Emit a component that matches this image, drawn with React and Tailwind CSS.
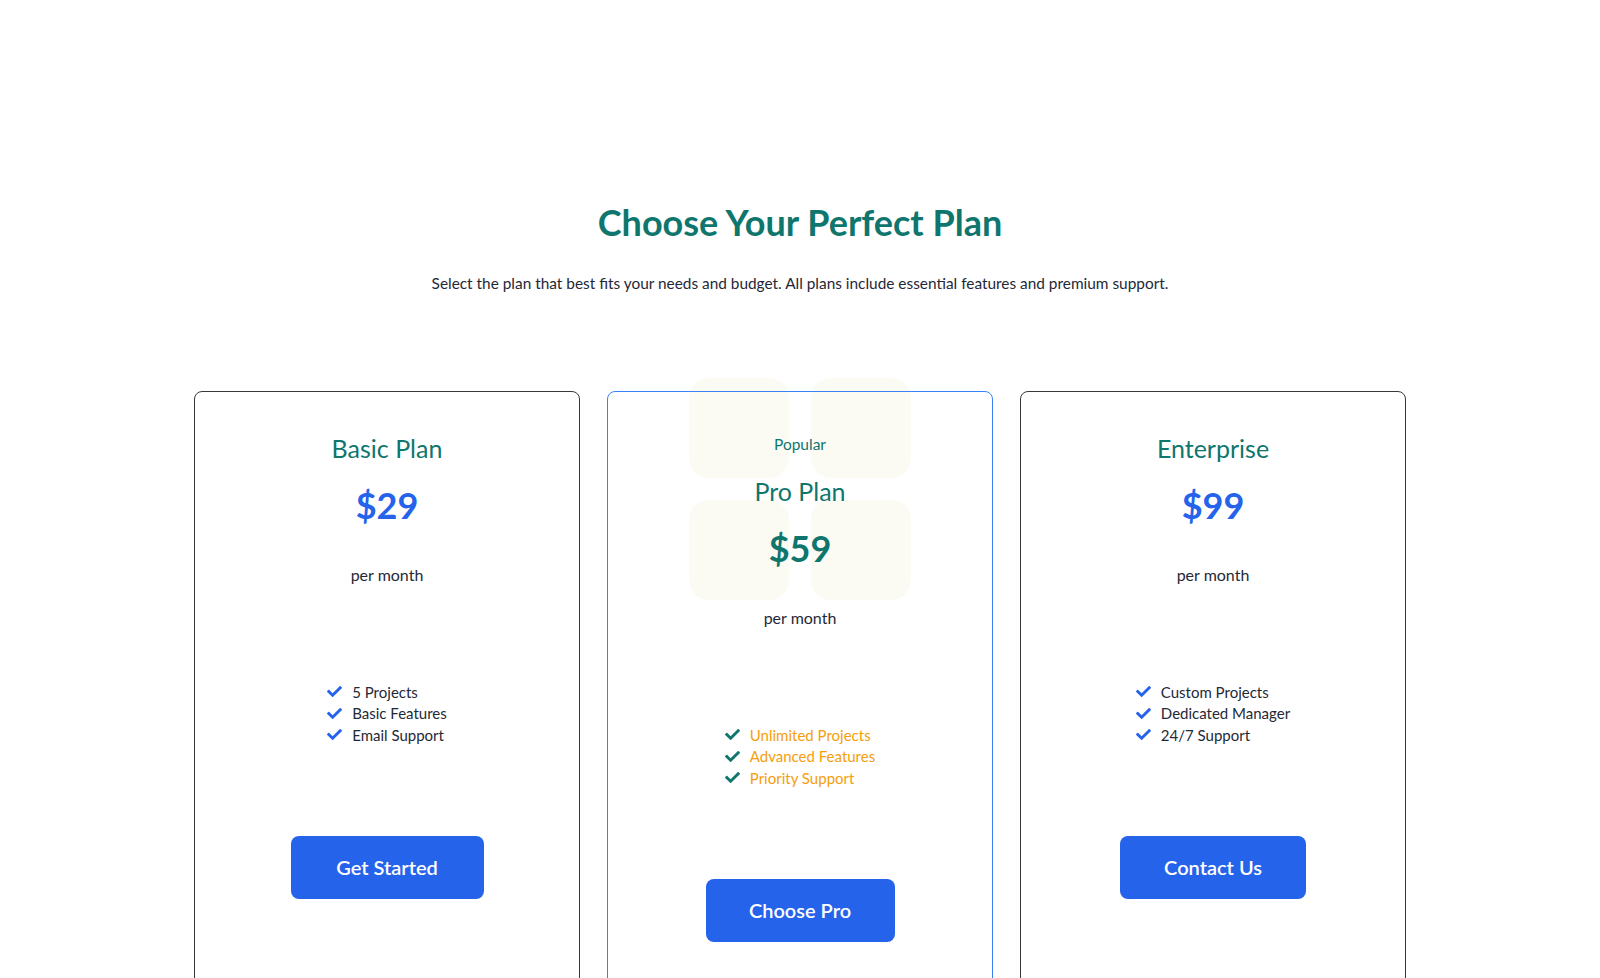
import React from "react";
import { FaCheck } from "react-icons/fa";

const plans = [
  {
    name: "Basic Plan",
    price: "$29",
    features: ["5 Projects", "Basic Features", "Email Support"],
    button: "Get Started",
    btnW: "w-[193px]",
  },
  {
    name: "Pro Plan",
    price: "$59",
    features: ["Unlimited Projects", "Advanced Features", "Priority Support"],
    button: "Choose Pro",
    popular: true,
    btnW: "w-[189px]",
  },
  {
    name: "Enterprise",
    price: "$99",
    features: ["Custom Projects", "Dedicated Manager", "24/7 Support"],
    button: "Contact Us",
    btnW: "w-[186px]",
  },
];

function Card({ plan }) {
  const pro = plan.popular;
  return (
    <div
      className={
        "relative rounded-lg border px-10 pt-10 pb-[120px] flex flex-col items-center " +
        (pro ? "border-[#3b82f6]" : "border-[#383838]")
      }
    >
      {pro && (
        <div className="pointer-events-none absolute -z-10 left-1/2 top-[-14px] -ml-[111px] w-[222px] flex flex-wrap justify-between gap-y-[22px]">
          <div className="h-[100px] w-[100px] rounded-[20px] bg-[#fcfbf3]" />
          <div className="h-[100px] w-[100px] rounded-[20px] bg-[#fcfbf3]" />
          <div className="h-[100px] w-[100px] rounded-[20px] bg-[#fcfbf3]" />
          <div className="h-[100px] w-[100px] rounded-[20px] bg-[#fcfbf3]" />
        </div>
      )}
      <div className="flex flex-col items-center w-full">
        {pro && (
          <div className="pt-[2px] pb-[21px] text-[15.5px] leading-5 text-[#0f766e]">Popular</div>
        )}
        <h3 className="text-[25px] leading-8 text-[#0f766e]">{plan.name}</h3>
        <div
          className={
            "mt-[21px] text-[36px] leading-10 font-bold " +
            (pro ? "text-[#0f766e]" : "text-[#2563eb]")
          }
        >
          {plan.price}
        </div>
        <div className="mt-[38px] text-[16px] leading-6 text-[#1f2937]">per month</div>
        <ul className="mt-[94px] flex flex-col">
          {plan.features.map((f) => (
            <li key={f} className="flex items-center gap-[10px] h-[21.5px]">
              <FaCheck
                className={"h-[15px] w-[15px] " + (pro ? "text-[#0f766e]" : "text-[#2563eb]")}
              />
              <span
                className={
                  "text-[15px] leading-5 " + (pro ? "text-[#f59e0b]" : "text-[#1f2937]")
                }
              >
                {f}
              </span>
            </li>
          ))}
        </ul>
        <button
          className={
            "mt-[90px] h-[63px] rounded-lg bg-[#2563eb] text-white text-[20px] font-semibold flex items-center justify-center " +
            plan.btnW
          }
        >
          {plan.button}
        </button>
      </div>
    </div>
  );
}

export default function App() {
  return (
    <div
      className="relative isolate min-h-screen bg-white overflow-hidden"
      style={{ fontFamily: "Lato, 'Noto Sans', sans-serif" }}
    >
      <div className="mx-auto max-w-[1280px] px-8 pt-[199px]">
        <h1 className="text-center text-[36px] leading-[46px] font-bold text-[#0f766e]">
          Choose Your Perfect Plan
        </h1>
        <p className="mt-[26px] text-center text-[15.4px] leading-6 text-[#1f2937]">
          Select the plan that best fits your needs and budget. All plans include essential features and premium support.
        </p>
        <div className="mt-[96px] grid grid-cols-3 gap-[27px] px-[2px]">
          {plans.map((p) => (
            <Card key={p.name} plan={p} />
          ))}
        </div>
      </div>
    </div>
  );
}
